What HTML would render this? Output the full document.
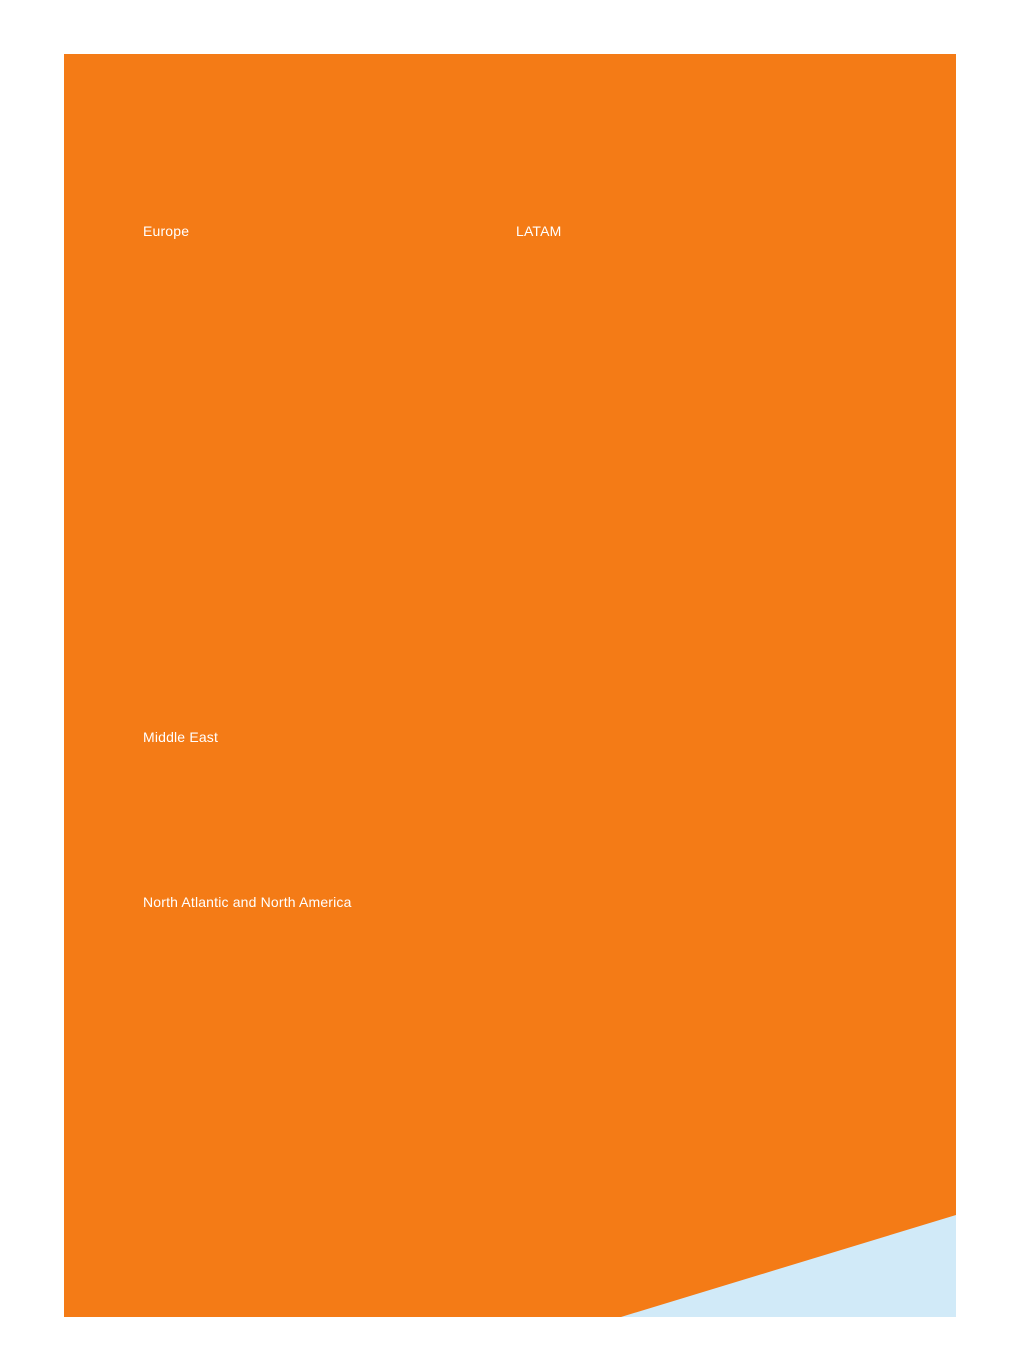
<!DOCTYPE html>
<html><head><style>
body{margin:0;background:#fff;width:1020px;height:1371px;position:relative;overflow:hidden;font-family:"Liberation Sans",sans-serif}
.o{position:absolute;left:64px;top:54px;width:892px;height:1263px;background:#f47b16}
.t{position:absolute;color:#fff;font-size:14px;line-height:16px;letter-spacing:0.17px}
svg{position:absolute;left:0;top:0}
</style></head><body>
<div class="o"></div>
<svg width="1020" height="1371"><polygon points="621,1317 956,1215 956,1317" fill="#d1eaf8"/></svg>
<div class="t" style="left:143px;top:223px">Europe</div>
<div class="t" style="left:516px;top:223px">LATAM</div>
<div class="t" style="left:143px;top:729px">Middle East</div>
<div class="t" style="left:143px;top:894px">North Atlantic and North America</div>
</body></html>
